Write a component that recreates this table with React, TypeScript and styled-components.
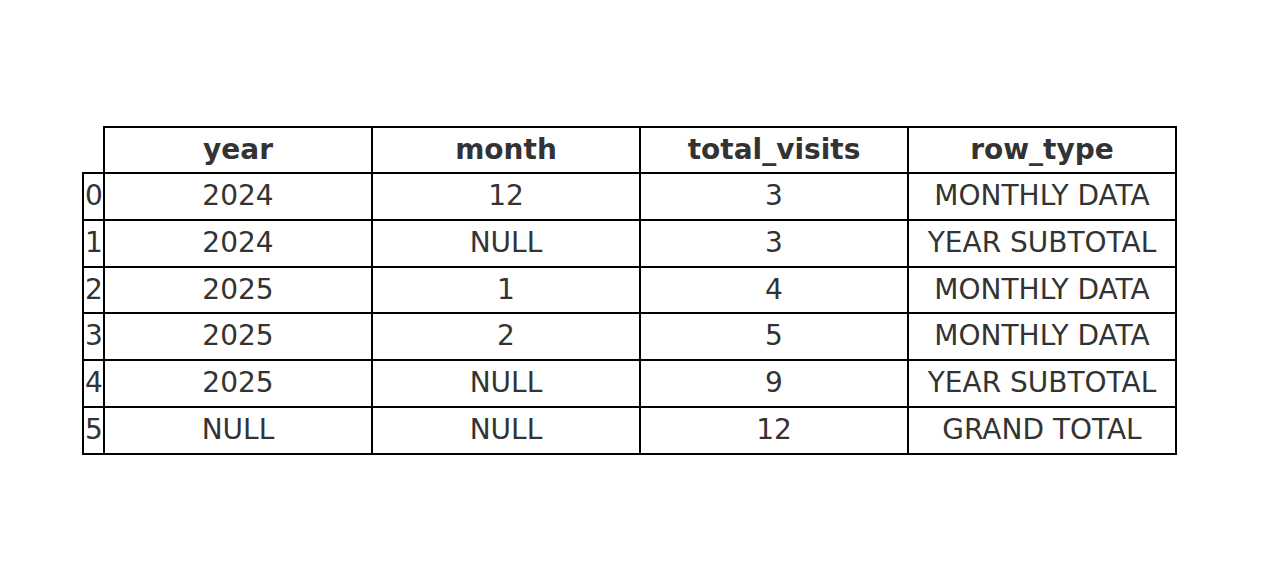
import React from "react";
import styled, { createGlobalStyle } from "styled-components";

const Global = createGlobalStyle`
  html, body { margin: 0; padding: 0; background: #ffffff; }
  body { font-family: "DejaVu Sans", "Liberation Sans", sans-serif; }
`;

const Page = styled.div`
  width: 1280px;
  height: 580px;
  box-sizing: border-box;
  padding-top: 126px;
  padding-left: 82px;
  background: #ffffff;
`;

const Grid = styled.div`
  display: inline-grid;
  grid-template-columns: 19px repeat(4, 266px);
  grid-template-rows: 44px 45px 45px 44px 45px 45px 45px;
  gap: 2px;
  padding: 2px;
  background: #000000;
  font-family: "DejaVu Sans", sans-serif;
  font-size: 28px;
  color: #333333;
`;

const Corner = styled.div`
  background: #ffffff;
  margin: -2px 0 0 -2px;
`;

const CellBase = styled.div`
  background: #ffffff;
  display: flex;
  align-items: center;
  white-space: nowrap;
  line-height: 1;
  padding-bottom: 1px;
  box-sizing: border-box;
`;

const Head = styled(CellBase)`
  justify-content: center;
  font-weight: bold;
`;

const Idx = styled(CellBase)`
  justify-content: flex-start;
  padding-left: 1px;
  overflow: visible;
`;

const Cell = styled(CellBase)`
  justify-content: center;
`;

const cols = ["year", "month", "total_visits", "row_type"];
const rows: (string | number)[][] = [
  [2024, 12, 3, "MONTHLY DATA"],
  [2024, "NULL", 3, "YEAR SUBTOTAL"],
  [2025, 1, 4, "MONTHLY DATA"],
  [2025, 2, 5, "MONTHLY DATA"],
  [2025, "NULL", 9, "YEAR SUBTOTAL"],
  ["NULL", "NULL", 12, "GRAND TOTAL"],
];

export default function App() {
  return (
    <>
      <Global />
      <Page>
        <Grid>
          <Corner />
          {cols.map((c) => (
            <Head key={c}>{c}</Head>
          ))}
          {rows.map((r, i) => (
            <React.Fragment key={i}>
              <Idx>{i}</Idx>
              {r.map((v, j) => (
                <Cell key={j}>{v}</Cell>
              ))}
            </React.Fragment>
          ))}
        </Grid>
      </Page>
    </>
  );
}
